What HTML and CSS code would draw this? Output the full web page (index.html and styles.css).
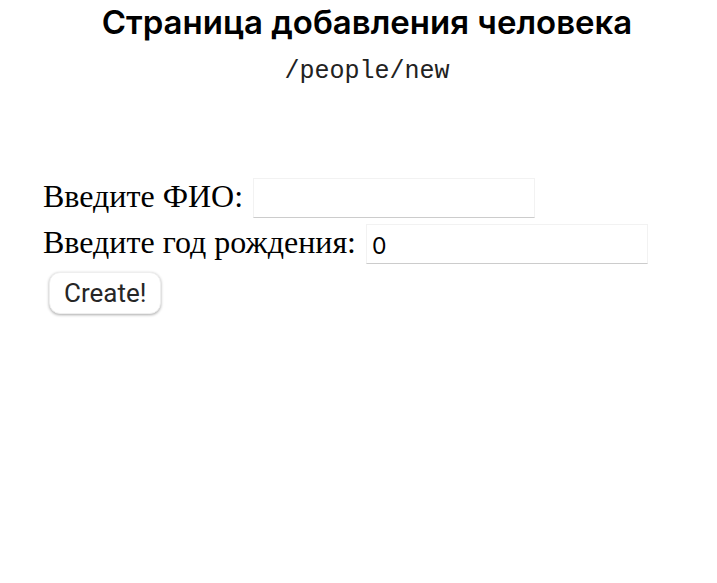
FILE: index.html
```html
<!DOCTYPE html>
<html lang="ru">
<head>
<meta charset="utf-8">
<title>Новый человек</title>
<link rel="stylesheet" href="styles.css">
</head>
<body>
<header class="header">
  <h1 class="title">Страница добавления человека</h1>
  <p class="path">/people/new</p>
</header>
<form class="form">
  <div class="row">
    <label for="name">Введите ФИО:</label>
    <input class="field" type="text" id="name">
  </div>
  <div class="row">
    <label for="year">Введите год рождения:</label>
    <input class="field" type="text" id="year" value="0">
  </div>
  <button class="submit" type="button">Create!</button>
</form>
</body>
</html>
```

FILE: styles.css
```css
* {
  box-sizing: border-box;
}

body {
  margin: 0;
  background: #fff;
  color: #000;
  font-family: "Liberation Serif", serif;
  font-size: 32px;
}

.header {
  padding: 4px 0 0 17px;
  text-align: center;
}

.title {
  margin: 0;
  font: 600 33px/36px Inter, sans-serif;
}

.path {
  margin: 14px 0 0;
  color: #222;
  font: 25px/36px "Liberation Mono", monospace;
}

.form {
  padding: 88px 43px 0;
}

.row {
  display: flex;
  align-items: flex-start;
  gap: 10px;
  margin-bottom: 6px;
  line-height: 37px;
}

.field {
  width: 282px;
  height: 40px;
  padding: 4px 5px 0;
  border: 1px solid #f2f2f2;
  border-bottom-color: #ccc;
  font: 23px Inter, sans-serif;
}

.submit {
  display: block;
  margin: 8px 6px;
  padding: 0 14px;
  height: 42px;
  border: 1px solid #eee;
  border-radius: 11px;
  background: #fff;
  box-shadow: 0 1px 3px #0005;
  color: #262626;
  font: 26px Roboto, sans-serif;
}
```
